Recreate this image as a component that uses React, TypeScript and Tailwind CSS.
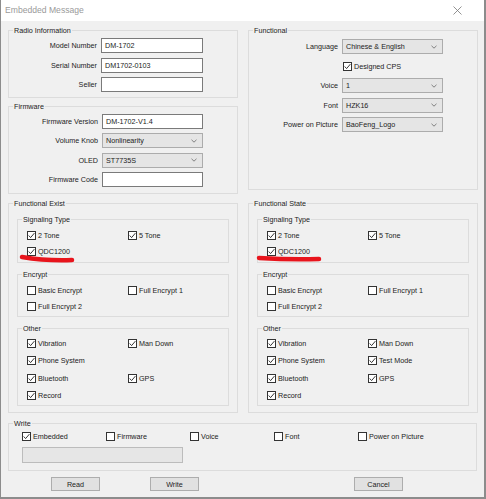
import React from "react";

function Check({ checked }: { checked?: boolean }) {
  return (
    <span className="flex h-[9px] w-[9px] shrink-0 items-center justify-center border border-[#333] bg-white">
      {checked && (
        <svg width="9" height="9" viewBox="0 0 9 9" className="-m-[1px]">
          <path d="M1.7 4.5 L3.6 6.6 L7.4 2.1" fill="none" stroke="#222" strokeWidth="0.9" />
        </svg>
      )}
    </span>
  );
}

function CheckItem({ label, checked }: { label: string; checked?: boolean }) {
  return (
    <div className="flex h-[12px] items-center gap-[2px]">
      <Check checked={checked} />
      <span className="leading-[9px]">{label}</span>
    </div>
  );
}

function Group({ title, className, children }: { title: string; className: string; children?: React.ReactNode }) {
  return (
    <div className={"border border-[#dcdcdc] " + className}>
      <div className="-mt-[5px] ml-[4px] w-fit bg-[#f0f0f0] px-[1px] leading-[9px]">{title}</div>
      {children}
    </div>
  );
}

function TextBox({ value, w }: { value?: string; w: string }) {
  return (
    <div className={"flex h-[15px] items-center border border-[#7a7a7a] bg-white pl-[3px] " + w}>
      <span className="leading-[9px]">{value}</span>
    </div>
  );
}

function Select({ value }: { value: string }) {
  return (
    <div className="flex h-[15px] w-[101px] items-center justify-between border border-[#acacac] bg-[#e5e5e5] pl-[3px] pr-[5px]">
      <span className="leading-[9px]">{value}</span>
      <svg width="6" height="4" viewBox="0 0 6 4">
        <path d="M0.5 0.8 L3 3.2 L5.5 0.8" fill="none" stroke="#666" strokeWidth="0.8" />
      </svg>
    </div>
  );
}

function Row({ label, lw, children }: { label: string; lw: string; children: React.ReactNode }) {
  return (
    <div className="flex h-[15px] items-center gap-[4px]">
      <span className={"text-right leading-[9px] " + lw}>{label}</span>
      {children}
    </div>
  );
}

function FuncGroup({ title, state }: { title: string; state?: boolean }) {
  return (
    <Group title={title} className="h-[210px] w-[230px]">
      <Group title="Signaling Type" className="mx-[8px] mt-[11px] h-[44px]">
        <div className="mt-[5px] grid grid-cols-[101px_1fr] gap-y-[4.5px] pl-[9px]">
          <CheckItem label="2 Tone" checked />
          <CheckItem label="5 Tone" checked />
          <CheckItem label="QDC1200" checked />
        </div>
      </Group>
      <Group title="Encrypt" className="mx-[8px] mt-[11px] h-[43px]">
        <div className="mt-[5px] grid grid-cols-[101px_1fr] gap-y-[4.5px] pl-[9px]">
          <CheckItem label="Basic Encrypt" />
          <CheckItem label="Full Encrypt 1" />
          <CheckItem label="Full Encrypt 2" />
        </div>
      </Group>
      <Group title="Other" className="mx-[8px] mt-[11px] h-[78px]">
        <div className="mt-[4.5px] grid grid-cols-[101px_1fr] gap-y-[5.3px] pl-[9px]">
          <CheckItem label="Vibration" checked />
          <CheckItem label="Man Down" checked />
          <CheckItem label="Phone System" checked />
          {state ? <CheckItem label="Test Mode" checked /> : <div />}
          <CheckItem label="Bluetooth" checked />
          <CheckItem label="GPS" checked />
          <CheckItem label="Record" checked />
        </div>
      </Group>
    </Group>
  );
}

function Button({ label, className }: { label: string; className: string }) {
  return (
    <div className={"flex h-[14px] w-[49px] items-center justify-center border border-[#adadad] bg-[#e1e1e1] " + className}>
      <span className="leading-[9px]">{label}</span>
    </div>
  );
}

export default function App() {
  return (
    <div className="relative flex h-[499px] w-[486px] flex-col border-b-2 border-l border-r-2 border-[#8c8c8c] bg-[#f0f0f0] font-['Liberation_Sans',Arial,sans-serif] text-[7.2px] text-[#222]">
      <div className="flex h-[21px] shrink-0 items-center justify-between bg-white pl-[4px] pr-[22px]">
        <span className="text-[8.6px] text-[#9a9a9a]">Embedded Message</span>
        <svg width="9" height="9" viewBox="0 0 9 9">
          <path d="M0.5 0.5 L8.5 8.5 M8.5 0.5 L0.5 8.5" stroke="#777" strokeWidth="0.8" />
        </svg>
      </div>

      <div className="flex flex-col pl-[7px] pr-[6px] pt-[9px]">
        <div className="flex gap-[10px]">
          <div className="flex w-[230px] flex-col">
            <Group title="Radio Information" className="h-[68px]">
              <div className="mt-[3px] flex flex-col gap-[4.5px]">
                <Row label="Model Number" lw="w-[88px]">
                  <TextBox value="DM-1702" w="w-[102px]" />
                </Row>
                <Row label="Serial Number" lw="w-[88px]">
                  <TextBox value="DM1702-0103" w="w-[102px]" />
                </Row>
                <Row label="Seller" lw="w-[88px]">
                  <TextBox w="w-[102px]" />
                </Row>
              </div>
            </Group>
            <Group title="Firmware" className="mt-[8px] h-[88px]">
              <div className="mt-[3px] flex flex-col gap-[4.3px]">
                <Row label="Firmware Version" lw="w-[89px]">
                  <TextBox value="DM-1702-V1.4" w="w-[101px]" />
                </Row>
                <Row label="Volume Knob" lw="w-[89px]">
                  <Select value="Nonlinearity" />
                </Row>
                <Row label="OLED" lw="w-[89px]">
                  <Select value="ST7735S" />
                </Row>
                <Row label="Firmware Code" lw="w-[89px]">
                  <TextBox w="w-[101px]" />
                </Row>
              </div>
            </Group>
          </div>
          <Group title="Functional" className="h-[160px] w-[230px]">
            <div className="mt-[4px] flex flex-col gap-[4.5px]">
              <Row label="Language" lw="w-[89px]">
                <Select value="Chinese & English" />
              </Row>
              <div className="flex h-[15px] items-center pl-[94px]">
                <CheckItem label="Designed CPS" checked />
              </div>
              <Row label="Voice" lw="w-[89px]">
                <Select value="1" />
              </Row>
              <Row label="Font" lw="w-[89px]">
                <Select value="HZK16" />
              </Row>
              <Row label="Power on Picture" lw="w-[89px]">
                <Select value="BaoFeng_Logo" />
              </Row>
            </div>
          </Group>
        </div>

        <div className="mt-[9px] flex gap-[10px]">
          <FuncGroup title="Functional Exist" />
          <FuncGroup title="Functional State" state />
        </div>

        <Group title="Write" className="mt-[10px] h-[48px] w-[469px]">
          <div className="mt-[2px] grid grid-cols-[84px_84px_84px_84px_1fr] pl-[13px]">
            <CheckItem label="Embedded" checked />
            <CheckItem label="Firmware" />
            <CheckItem label="Voice" />
            <CheckItem label="Font" />
            <CheckItem label="Power on Picture" />
          </div>
          <div className="ml-[13px] mt-[5px] h-[16px] w-[161px] border border-[#bcbcbc] bg-[#e6e6e6]" />
        </Group>

        <div className="mt-[6px] flex">
          <Button label="Read" className="ml-[43px]" />
          <Button label="Write" className="ml-[50px]" />
          <Button label="Cancel" className="ml-[155px]" />
        </div>
      </div>

      <svg className="pointer-events-none absolute left-0 top-0" width="486" height="499" viewBox="0 0 486 499">
        <path d="M21 257 Q45 261 71 260" fill="none" stroke="#e8141c" strokeWidth="4.5" strokeLinecap="round" />
        <path d="M258 258 Q290 260 318 259" fill="none" stroke="#e8141c" strokeWidth="4.5" strokeLinecap="round" />
      </svg>
    </div>
  );
}
